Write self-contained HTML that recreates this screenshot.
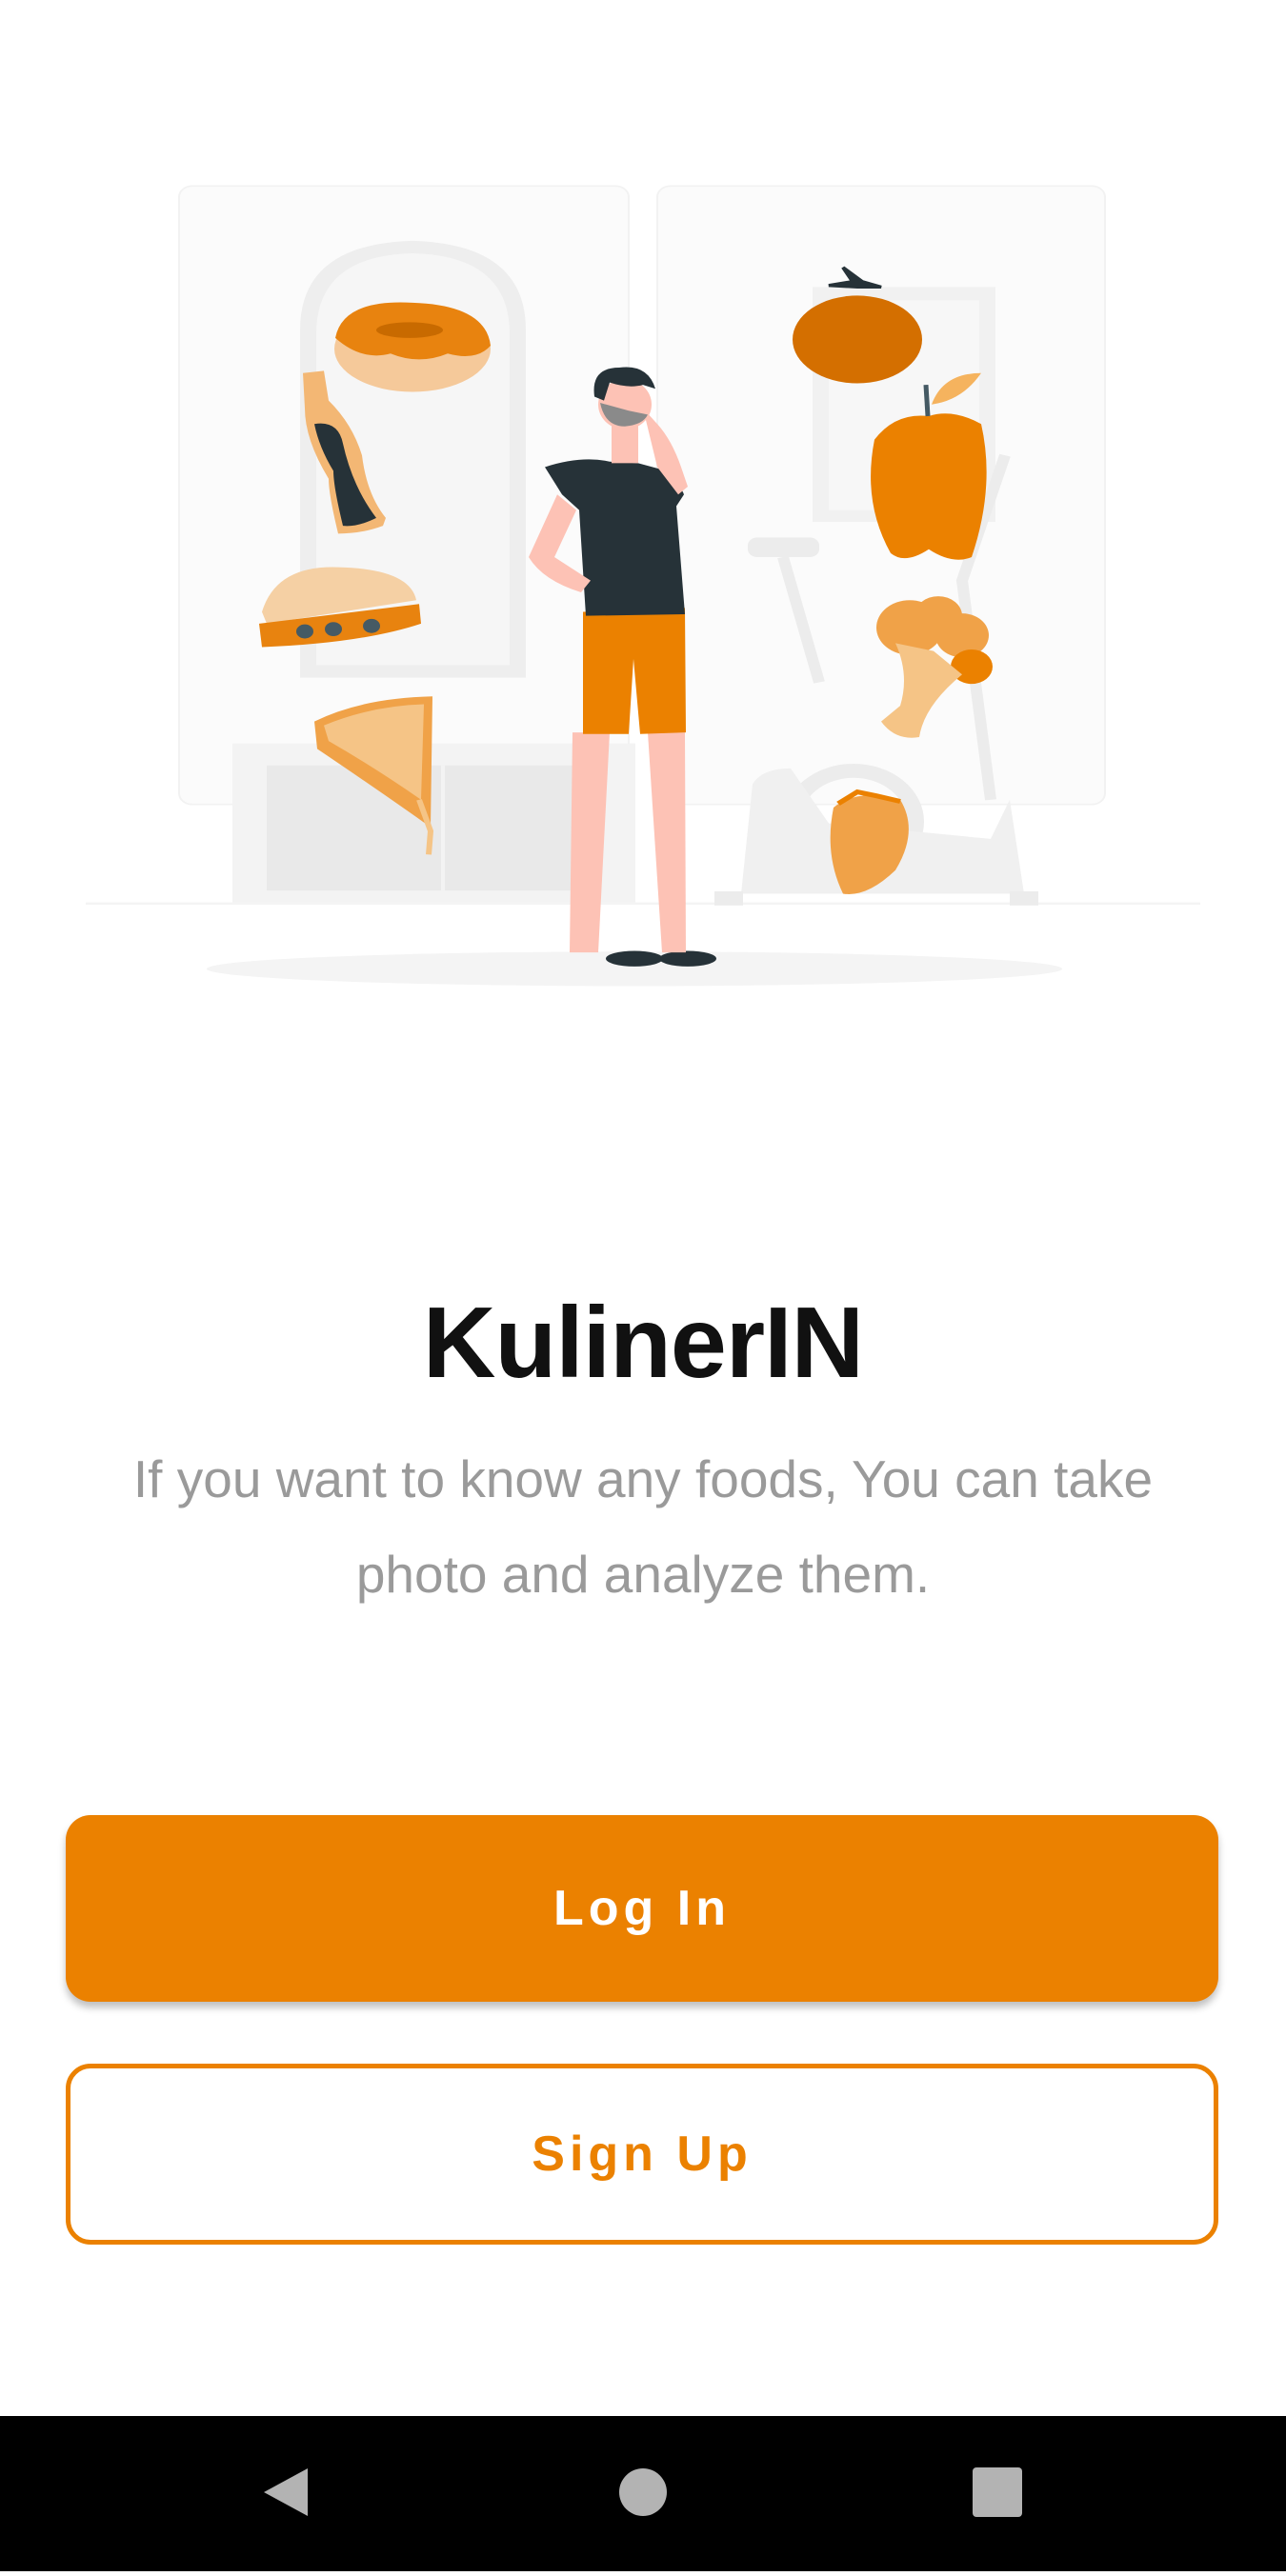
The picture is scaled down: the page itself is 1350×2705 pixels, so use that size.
<!DOCTYPE html>
<html><head><meta charset="utf-8"><style>
*{margin:0;padding:0;box-sizing:border-box}
html,body{width:1350px;height:2700px;background:#fff;overflow:hidden;font-family:"Liberation Sans",sans-serif}
.title{position:absolute;top:1350px;left:0;width:1350px;text-align:center;font-size:106px;font-weight:bold;color:#111;letter-spacing:-1px}
.sub{position:absolute;top:1503px;left:50px;width:1250px;text-align:center;font-size:55px;line-height:100px;color:#9a9a9a}
.btn{position:absolute;left:69px;width:1210px;border-radius:26px;display:flex;align-items:center;justify-content:center;font-size:52px;font-weight:bold;letter-spacing:5px}
.login{top:1906px;height:196px;background:#EB8100;color:#fff;box-shadow:0 6px 8px rgba(0,0,0,.25)}
.signup{top:2167px;height:190px;border:5px solid #EB8100;color:#EB8100;background:#fff}
.nav{position:absolute;top:2537px;left:0;width:1350px;height:163px;background:#000}
</style></head><body>
<svg width="1350" height="1100" style="position:absolute;top:0;left:0" viewBox="0 0 1350 1100">
<g transform="matrix(1,0,0,0.822,0,17.8)">
<rect x="188" y="216" width="472" height="790" rx="14" fill="#fbfbfb" stroke="#f2f2f2" stroke-width="2"/>
<rect x="690" y="216" width="470" height="790" rx="14" fill="#fbfbfb" stroke="#f2f2f2" stroke-width="2"/>
<path d="M315 844 V400 Q315 290 433 286 Q552 290 552 400 V844Z" fill="#eeeeee"/>
<path d="M332 828 V405 Q332 305 433 302 Q535 305 535 405 V828Z" fill="#f6f6f6"/>
<rect x="853" y="345" width="192" height="300" fill="#f1f1f1"/>
<rect x="870" y="362" width="158" height="268" fill="#f7f7f7"/>
<rect x="244" y="928" width="423" height="206" fill="#f3f3f3"/>
<rect x="280" y="956" width="350" height="160" fill="#e9e9e9"/>
<rect x="463" y="956" width="4" height="160" fill="#f3f3f3"/>
<rect x="90" y="1131" width="1170" height="3" fill="#f4f4f4"/>
<circle cx="896" cy="1028" r="65" fill="none" stroke="#ececec" stroke-width="18"/>
<path d="M778 1120 L790 980 Q800 960 830 960 L870 1030 L1040 1050 L1060 1000 L1075 1120Z" fill="#f0f0f0"/>
<path d="M1055 560 L1010 720 L1040 1000" stroke="#ececec" stroke-width="12" fill="none"/>
<rect x="785" y="665" width="75" height="25" rx="10" fill="#ececec"/>
<path d="M822 690 L860 850" stroke="#ececec" stroke-width="12"/>
<rect x="750" y="1117" width="30" height="18" fill="#ececec"/><rect x="1060" y="1117" width="30" height="18" fill="#ececec"/>
<ellipse cx="666" cy="1216" rx="449" ry="22" fill="#f4f4f4"/>
<ellipse cx="433" cy="424" rx="82" ry="55" fill="#f5c99a"/>
<path d="M352 410 Q360 360 433 365 Q510 368 515 420 Q500 440 470 430 Q440 445 410 430 Q380 440 352 410Z" fill="#e8830f"/>
<ellipse cx="430" cy="400" rx="35" ry="10" fill="#c86a00"/>
<path d="M318 455 L340 452 L345 490 Q370 520 380 560 Q385 610 405 640 L402 650 Q380 660 355 660 Q345 610 345 590 Q320 540 320 500Z" fill="#f3b774"/>
<path d="M330 520 Q355 515 360 545 Q370 600 395 640 Q375 652 360 650 Q350 600 350 580 Q335 550 330 520Z" fill="#263238"/>
<path d="M275 760 Q290 700 355 703 Q430 705 437 745 L280 775Z" fill="#f5d0a4"/>
<path d="M272 775 L440 750 L442 775 Q380 800 275 805Z" fill="#e8830f"/>
<circle cx="320" cy="785" r="9" fill="#455a64"/><circle cx="350" cy="782" r="9" fill="#455a64"/><circle cx="390" cy="778" r="9" fill="#455a64"/>
<path d="M330 900 Q380 870 454 868 L452 1035 Q400 990 333 935Z" fill="#f0a248"/>
<path d="M340 905 Q390 880 445 878 L442 1000 Q395 960 345 925Z" fill="#f5c486"/>
<path d="M440 1000 L452 1040 L450 1070" stroke="#f5c486" stroke-width="6" fill="none"/>
<ellipse cx="666" cy="1203" rx="30" ry="10" fill="#263238"/><ellipse cx="722" cy="1203" rx="30" ry="10" fill="#263238"/>
<path d="M601 914 L640 914 L628 1195 L598 1195Z" fill="#fdc2b5"/>
<path d="M680 914 L719 914 L720 1195 L695 1195Z" fill="#fdc2b5"/>
<path d="M612 760 L719 755 L720 914 L672 916 L665 820 L660 916 L612 916Z" fill="#eb8100"/>
<path d="M572 575 Q610 560 640 568 L670 570 L700 580 Q715 600 718 610 L710 625 L719 763 L615 765 L608 630 L590 610Z" fill="#263238"/>
<path d="M585 610 L555 690 Q570 720 610 735 L620 720 L582 690 L605 630Z" fill="#fdc2b5"/>
<path d="M675 500 L690 520 Q705 540 715 575 L722 600 L712 610 L690 575 Z" fill="#fdc2b5"/>
<rect x="642" y="470" width="28" height="100" fill="#fdc2b5"/>
<ellipse cx="656" cy="495" rx="28" ry="32" fill="#fdc2b5"/>
<path d="M630 493 Q635 523 656 523 Q675 521 680 508 L660 503Z" fill="#8a8a8a"/>
<path d="M624 485 Q620 448 650 448 Q680 443 688 475 L675 470 Q660 475 640 467 L634 490Z" fill="#263238"/>
<ellipse cx="900" cy="412" rx="68" ry="56" fill="#d46f00"/>
<path d="M885 320 L895 338 L870 343 L900 345 L925 345 L905 338Z" fill="#263238" stroke="#263238" stroke-width="4"/>
<path d="M975 510 Q1000 500 1030 520 Q1045 600 1020 690 Q1000 700 975 680 Q950 700 935 685 Q905 620 918 540 Q940 505 975 510Z" fill="#eb8100"/>
<path d="M974 510 L972 470" stroke="#455a64" stroke-width="5"/>
<path d="M978 495 Q990 455 1030 455 Q1010 490 978 495Z" fill="#f5b35e"/>
<circle cx="955" cy="780" r="35" fill="#f0a248"/><circle cx="1010" cy="790" r="28" fill="#f0a248"/><circle cx="1020" cy="830" r="22" fill="#eb8100"/><circle cx="985" cy="765" r="25" fill="#f0a248"/>
<path d="M940 800 Q955 840 945 880 L925 900 Q940 925 965 920 Q970 880 1010 840 L980 810Z" fill="#f5c486"/>
<path d="M875 1010 Q900 985 945 1000 Q965 1040 940 1090 Q910 1125 885 1120 Q865 1070 875 1010Z" fill="#f0a248"/>
<path d="M880 1005 L900 990 L920 995 L945 1002" stroke="#eb8100" stroke-width="6" fill="none"/>
</g>
</svg>
<div class="title">KulinerIN</div>
<div class="sub">If you want to know any foods, You can take<br>photo and analyze them.</div>
<div class="btn login">Log In</div>
<div class="btn signup">Sign Up</div>
<div class="nav">
<svg width="1350" height="163" viewBox="0 0 1350 163">
<path d="M323 55 L323 105 L277 80Z" fill="#b3b3b3"/>
<circle cx="675" cy="80" r="25" fill="#b3b3b3"/>
<rect x="1021" y="54" width="52" height="52" rx="4" fill="#b3b3b3"/>
</svg>
</div>
</body></html>
